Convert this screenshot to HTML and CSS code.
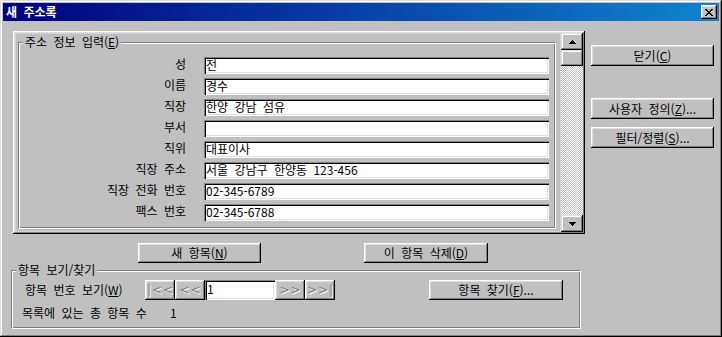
FILE: index.html
```html
<!DOCTYPE html>
<html lang="ko">
<head>
<meta charset="UTF-8">
<title>새 주소록</title>
<link rel="stylesheet" href="styles.css">
</head>
<body>

<div class="window">
  <div class="titlebar">
    <span class="title">새 주소록</span>
    <span class="close">
      <svg width="8" height="7" viewBox="0 0 8 7"><path d="M0 0h2v1H0zM6 0h2v1H6zM1 1h2v1H1zM5 1h2v1H5zM2 2h4v1H2zM3 3h2v1H3zM2 4h4v1H2zM1 5h2v1H1zM5 5h2v1H5zM0 6h2v1H0zM6 6h2v1H6z" fill="#000"/></svg>
    </span>
  </div>

  <div class="client">
    <div class="main">
      <div class="panel">
        <div class="panel-content">
          <fieldset class="group info-group">
            <legend>주소 정보 입력(<u>E</u>)</legend>
            <div class="form">
              <label>성</label><div class="field">전</div>
              <label>이름</label><div class="field">경수</div>
              <label>직장</label><div class="field">한양 강남 섬유</div>
              <label>부서</label><div class="field"></div>
              <label>직위</label><div class="field">대표이사</div>
              <label>직장 주소</label><div class="field">서울 강남구 한양동 123-456</div>
              <label>직장 전화 번호</label><div class="field">02-345-6789</div>
              <label>팩스 번호</label><div class="field">02-345-6788</div>
            </div>
          </fieldset>
        </div>
        <div class="scrollbar">
          <div class="sb-btn"><svg width="7" height="4" viewBox="0 0 7 4"><path d="M3 0h1v1h1v1h1v1h1v1H0V3h1V2h1V1h1z" fill="#000"/></svg></div>
          <div class="sb-thumb"></div>
          <div class="sb-track"></div>
          <div class="sb-btn"><svg width="7" height="4" viewBox="0 0 7 4"><path d="M0 0h7v1H6v1H5v1H4v1H3V3H2V2H1V1H0z" fill="#000"/></svg></div>
        </div>
      </div>

      <div class="entry-actions">
        <button class="btn btn-new">새 항목(<u>N</u>)</button>
        <button class="btn btn-del">이 항목 삭제(<u>D</u>)</button>
      </div>

      <fieldset class="group nav-group">
        <legend>항목 보기/찾기</legend>
        <div class="nav-row">
          <span class="nav-label">항목 번호 보기(<u>W</u>)</span>
          <div class="nav">
            <button class="nav-btn" disabled>|&lt;&lt;</button>
            <button class="nav-btn" disabled>&lt;&lt;</button>
            <div class="field nav-field">1</div>
            <button class="nav-btn" disabled>&gt;&gt;</button>
            <button class="nav-btn" disabled>&gt;&gt;|</button>
          </div>
          <button class="btn btn-find">항목 찾기(<u>F</u>)...</button>
        </div>
        <div class="count-row">
          <span class="count-label">목록에 있는 총 항목 수</span>
          <span>1</span>
        </div>
      </fieldset>
    </div>

    <div class="side">
      <button class="btn">닫기(<u>C</u>)</button>
      <button class="btn btn-custom">사용자 정의(<u>Z</u>)...</button>
      <button class="btn btn-filter">필터/정렬(<u>S</u>)...</button>
    </div>
  </div>
</div>

</body>
</html>
```

FILE: styles.css
```css
* {
  box-sizing: border-box;
  margin: 0;
  padding: 0;
}

body {
  font-family: "Noto Sans CJK KR", "Liberation Sans", sans-serif;
  font-size: 12px;
  line-height: 14px;
  word-spacing: 3px;
  color: #000;
  background: #c0c0c0;
}

.window {
  width: 722px;
  height: 337px;
  padding: 3px;
  background: #c0c0c0;
  box-shadow: inset -1px -1px #000, inset 1px 1px #dfdfdf, inset -2px -2px #808080, inset 2px 2px #fff;
}

/* title bar */
.titlebar {
  height: 18px;
  display: flex;
  align-items: center;
  justify-content: space-between;
  padding: 0 2px 0 3px;
  background: linear-gradient(to right, #000080, #1084d0);
}

.title {
  color: #fff;
  font-weight: bold;
}

.close {
  width: 16px;
  height: 14px;
  display: flex;
  align-items: center;
  justify-content: center;
  background: #c0c0c0;
  box-shadow: inset -1px -1px #000, inset 1px 1px #fff, inset -2px -2px #808080, inset 2px 2px #dfdfdf;
}

/* client area */
.client {
  display: flex;
  align-items: flex-start;
  padding: 10px 0 0 8px;
}

.main {
  width: 574px;
  display: flex;
  flex-direction: column;
}

.panel {
  margin-left: 2px;
  width: 572px;
  height: 203px;
  display: flex;
  padding: 2px;
  box-shadow: inset -1px -1px #000, inset 1px 1px #fff, inset -2px -2px #808080, inset 2px 2px #dfdfdf;
}

.panel-content {
  flex: 1;
  padding: 2px 5px 0 3px;
  outline: 1px dotted #e6e6e6;
  outline-offset: -1px;
}

/* group boxes */
.group {
  border: 1px solid;
  border-color: #808080 #fff #fff #808080;
  box-shadow: inset 1px 1px #fff, inset -1px -1px #808080;
  min-inline-size: 0;
}

.group legend {
  margin-left: 4px;
  padding: 0 2px;
  background: #c0c0c0;
  line-height: 14px;
}

.info-group {
  padding: 8px 0 7px 0;
}

.form {
  display: grid;
  grid-template-columns: 167px 345px;
  grid-auto-rows: 17px;
  column-gap: 18px;
  row-gap: 4px;
}

.form label {
  text-align: right;
  white-space: nowrap;
}

.field {
  background: #fff;
  height: 17px;
  padding: 1px 2px 0 2px;
  white-space: nowrap;
  overflow: hidden;
  box-shadow: inset 1px 1px #808080, inset 2px 2px #000, inset -1px -1px #fff, inset -2px -2px #dfdfdf;
}

/* scrollbar */
.scrollbar {
  width: 22px;
  display: flex;
  flex-direction: column;
}

.sb-btn,
.sb-thumb {
  height: 17px;
  display: flex;
  align-items: center;
  justify-content: center;
  background: #c0c0c0;
  box-shadow: inset -1px -1px #000, inset 1px 1px #dfdfdf, inset -2px -2px #808080, inset 2px 2px #fff;
}

.sb-thumb {
  height: 16px;
}

.sb-track {
  flex: 1;
  background: repeating-conic-gradient(#fff 0 25%, #c0c0c0 0 50%) 0 0 / 2px 2px;
}

/* buttons */
.btn {
  font: inherit;
  word-spacing: 3px;
  color: #000;
  height: 21px;
  width: 123px;
  background: #c0c0c0;
  border: none;
  box-shadow: inset -1px -1px #000, inset 1px 1px #fff, inset -2px -2px #808080, inset 2px 2px #dfdfdf;
  cursor: pointer;
}

.entry-actions {
  display: flex;
  margin-top: 9px;
}

.entry-actions .btn {
  height: 20px;
}

.btn-new {
  margin-left: 127px;
}

.btn-del {
  margin-left: 103px;
  width: 124px;
}

/* bottom group */
.nav-group {
  width: 570px;
  padding: 3px 0 8px 0;
}

.nav-row {
  display: flex;
  align-items: center;
  height: 20px;
}

.nav-label {
  margin-left: 13px;
  width: 120px;
  white-space: nowrap;
}

.nav {
  display: flex;
}

.nav-btn {
  font-family: "DejaVu Sans", sans-serif;
  font-size: 12px;
  letter-spacing: 1px;
  width: 30px;
  height: 20px;
  padding-left: 1px;
  border: none;
  background: #c0c0c0;
  color: #808080;
  text-shadow: 1px 1px #fff;
  box-shadow: inset -1px -1px #000, inset 1px 1px #fff, inset -2px -2px #808080, inset 2px 2px #dfdfdf;
}

.nav-field {
  width: 70px;
  height: 20px;
  padding-top: 2px;
}

.btn-find {
  margin-left: 94px;
  width: 134px;
  height: 20px;
}

.count-row {
  display: flex;
  margin-top: 6px;
}

.count-label {
  margin-left: 10px;
  width: 148px;
}

/* right column */
.side {
  margin-left: 6px;
  padding-top: 14px;
  display: flex;
  flex-direction: column;
}

.btn-custom {
  margin-top: 32px;
}

.btn-filter {
  margin-top: 8px;
}
```
